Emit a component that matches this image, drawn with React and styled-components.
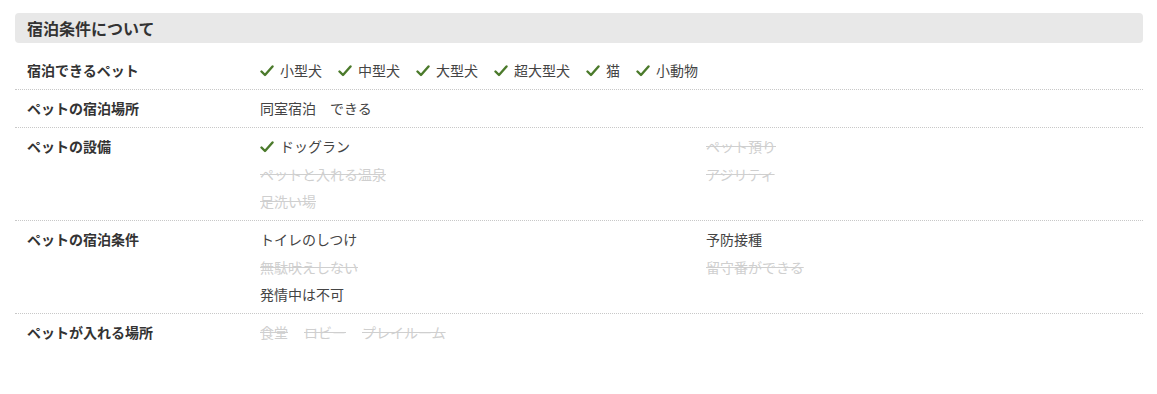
import React from "react";
import styled, { createGlobalStyle } from "styled-components";

const GlobalStyle = createGlobalStyle`
  body {
    margin: 0;
    background: #fff;
    font-family: "Noto Sans CJK JP", "Noto Sans", sans-serif;
    color: #333;
  }
`;

const rows = [
  {
    label: "宿泊できるペット",
    gap: 16,
    items: [
      { text: "小型犬", check: true },
      { text: "中型犬", check: true },
      { text: "大型犬", check: true },
      { text: "超大型犬", check: true },
      { text: "猫", check: true },
      { text: "小動物", check: true },
    ],
  },
  {
    label: "ペットの宿泊場所",
    gap: 14,
    items: [{ text: "同室宿泊" }, { text: "できる" }],
  },
  {
    label: "ペットの設備",
    grid: true,
    items: [
      { text: "ドッグラン", check: true },
      { text: "ペット預り", off: true },
      { text: "ペットと入れる温泉", off: true },
      { text: "アジリティ", off: true },
      { text: "足洗い場", off: true },
    ],
  },
  {
    label: "ペットの宿泊条件",
    grid: true,
    items: [
      { text: "トイレのしつけ" },
      { text: "予防接種" },
      { text: "無駄吠えしない", off: true },
      { text: "留守番ができる", off: true },
      { text: "発情中は不可" },
    ],
  },
  {
    label: "ペットが入れる場所",
    gap: 16,
    items: [
      { text: "食堂", off: true },
      { text: "ロビー", off: true },
      { text: "プレイルーム", off: true },
    ],
  },
];

const Check = () => (
  <CheckIcon viewBox="0 0 14 12" aria-hidden="true">
    <polyline points="1.5,6.5 5,10 12.5,1.5" />
  </CheckIcon>
);

export default function App() {
  return (
    <>
      <GlobalStyle />
      <Section>
        <Heading>宿泊条件について</Heading>
        <List>
          {rows.map((row) => (
            <Row key={row.label}>
              <Label>{row.label}</Label>
              <Values $grid={row.grid} $gap={row.gap}>
                {row.items.map((it) => (
                  <Item key={it.text} $off={it.off}>
                    {it.check && <Check />}
                    {it.text}
                  </Item>
                ))}
              </Values>
            </Row>
          ))}
        </List>
      </Section>
    </>
  );
}

const Section = styled.section`
  padding: 13px 14px 0 15px;
`;

const Heading = styled.h2`
  margin: 0;
  height: 30px;
  line-height: 31px;
  padding: 0 12px;
  background: #e8e8e8;
  border-radius: 4px;
  font-size: 16px;
  font-weight: bold;
  color: #333;
`;

const List = styled.div`
  margin-top: 9px;
`;

const Row = styled.div`
  display: grid;
  grid-template-columns: 245px 1fr;
  padding: 5px 0 4.5px;
  border-bottom: 1px dotted #c8c8c8;

  &:last-child {
    border-bottom: none;
  }
`;

const Label = styled.div`
  padding-left: 12px;
  font-size: 14px;
  font-weight: bold;
  line-height: 27.5px;
  color: #333;
`;

const Values = styled.div`
  display: ${(p) => (p.$grid ? "grid" : "flex")};
  grid-template-columns: 446px 1fr;
  column-gap: ${(p) => p.$gap || 0}px;
  flex-wrap: wrap;
`;

const Item = styled.span`
  display: inline-flex;
  align-items: center;
  font-size: 14px;
  line-height: 27.5px;
  color: ${(p) => (p.$off ? "#cfcfcf" : "#444")};
  text-decoration: ${(p) => (p.$off ? "line-through" : "none")};
`;

const CheckIcon = styled.svg`
  width: 14px;
  height: 12px;
  margin-right: 6px;
  fill: none;
  stroke: #4b7a2b;
  stroke-width: 2.4;
  stroke-linecap: round;
  stroke-linejoin: round;
`;
